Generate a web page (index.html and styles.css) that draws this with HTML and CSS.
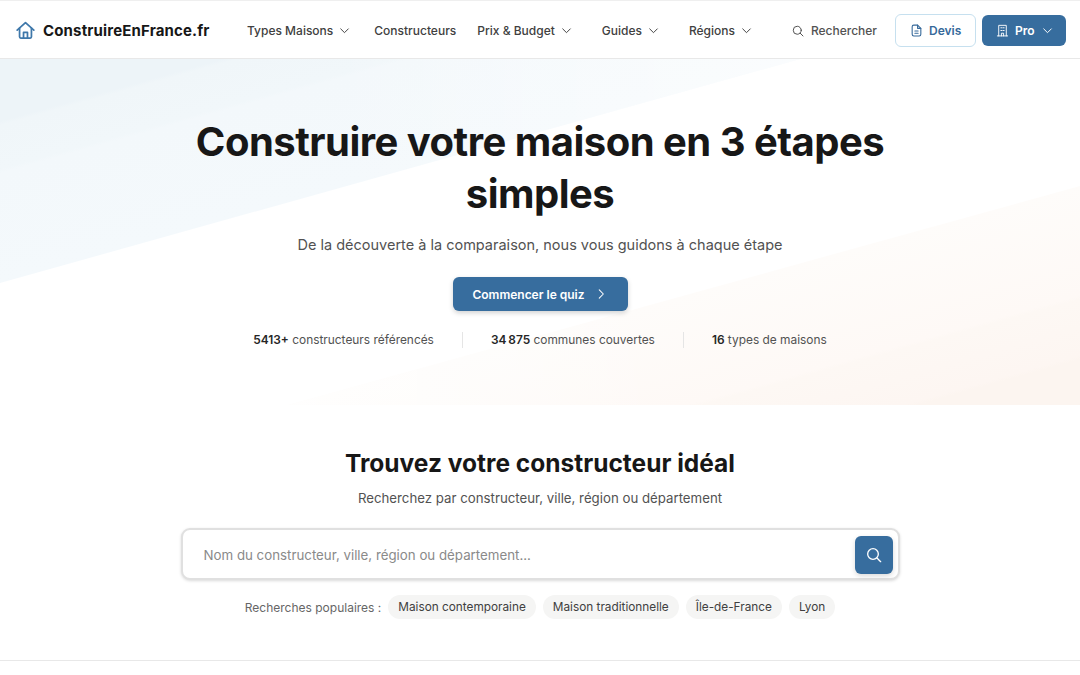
FILE: index.html
```html
<!DOCTYPE html>
<html lang="fr">
  <head>
    <meta charset="UTF-8" />
    <meta name="viewport" content="width=device-width" />
    <title>ConstruireEnFrance.fr</title>
    <link rel="stylesheet" href="styles.css">
  </head>
  <body>
    <header class="topbar">
      <a class="logo" href="#">
        <svg class="logo-icon" viewBox="0 0 24 24" fill="none" stroke="#3f78aa" stroke-width="2.200" stroke-linecap="round" stroke-linejoin="round">
          <path d="M1.500 11.500 12 2l10.500 9.500" />
          <path d="M4.500 9v11a1.500 1.500 0 0 0 1.500 1.500h12a1.500 1.500 0 0 0 1.500-1.500V9" />
          <path d="M9.500 21.500V14.500h5v7" />
        </svg>
        <span>ConstruireEnFrance.fr</span>
      </a>
      <nav class="nav">
        <a class="nav-link nav-types" href="#">Types Maisons
          <svg class="chev" viewBox="0 0 24 24"><path d="m5 9 7 7 7-7" /></svg>
        </a>
        <a class="nav-link nav-cons" href="#">Constructeurs</a>
        <a class="nav-link nav-prix" href="#">Prix &amp; Budget
          <svg class="chev" viewBox="0 0 24 24"><path d="m5 9 7 7 7-7" /></svg>
        </a>
        <a class="nav-link nav-guides" href="#">Guides
          <svg class="chev" viewBox="0 0 24 24"><path d="m5 9 7 7 7-7" /></svg>
        </a>
        <a class="nav-link" href="#">Régions
          <svg class="chev" viewBox="0 0 24 24"><path d="m5 9 7 7 7-7" /></svg>
        </a>
      </nav>
      <div class="actions">
        <a class="search-link" href="#">
          <svg class="search-icon" viewBox="0 0 24 24" fill="none" stroke="currentColor" stroke-width="2" stroke-linecap="round"><circle cx="10.500" cy="10.500" r="8" /><path d="m16.500 16.500 5.500 5.500" /></svg>
          Rechercher
        </a>
        <a class="btn-devis" href="#">
          <svg class="btn-icon" viewBox="0 0 24 24" fill="none" stroke="currentColor" stroke-width="2" stroke-linecap="round" stroke-linejoin="round"><path d="M14 2H7a3 3 0 0 0-3 3v14a3 3 0 0 0 3 3h10a3 3 0 0 0 3-3V8z" /><path d="M14 2v6h6M9 13h6M9 17h6" /></svg>
          Devis
        </a>
        <a class="btn-pro" href="#">
          <svg class="btn-icon" viewBox="0 0 24 24" fill="none" stroke="currentColor" stroke-width="1.700" stroke-linecap="round" stroke-linejoin="round"><path d="M5 22V2.500h14V22M2.500 22h19M10 22v-5h4v5M9 7h2M13 7h2M9 12h2M13 12h2" /></svg>
          Pro
          <svg class="chev chev-pro" viewBox="0 0 24 24"><path d="m5 9 7 7 7-7" /></svg>
        </a>
      </div>
    </header>

    <section class="hero">
      <h1>Construire votre maison en 3 étapes simples</h1>
      <p class="hero-sub">De la découverte à la comparaison, nous vous guidons à chaque étape</p>
      <a class="btn-quiz" href="#">Commencer le quiz
        <svg class="quiz-arrow" viewBox="0 0 24 24"><path d="m9 5 7 7-7 7" /></svg>
      </a>
      <div class="stats">
        <div class="stat"><b>5413+</b> constructeurs référencés</div>
        <div class="stat"><b>34&#8239;875</b> communes couvertes</div>
        <div class="stat"><b>16</b> types de maisons</div>
      </div>
    </section>

    <section class="finder">
      <h2>Trouvez votre constructeur idéal</h2>
      <p class="finder-sub">Recherchez par constructeur, ville, région ou département</p>
      <form class="search-box">
        <input type="text" placeholder="Nom du constructeur, ville, région ou département..." />
        <button type="button" class="search-btn" aria-label="Rechercher">
          <svg viewBox="0 0 24 24" fill="none" stroke="currentColor" stroke-width="2" stroke-linecap="round"><circle cx="10.500" cy="10.500" r="8" /><path d="m16.500 16.500 5.500 5.500" /></svg>
        </button>
      </form>
      <div class="popular">
        <span class="popular-label">Recherches populaires :</span>
        <a class="tag" href="#">Maison contemporaine</a>
        <a class="tag" href="#">Maison traditionnelle</a>
        <a class="tag" href="#">Île-de-France</a>
        <a class="tag" href="#">Lyon</a>
      </div>
    </section>
  </body>
</html>
```

FILE: styles.css
```css
* {
  box-sizing: border-box;
}

body {
  margin: 0;
  font-family: Inter, "Liberation Sans", sans-serif;
  background-color: white;
  color: #171717;
}

a {
  color: inherit;
  text-decoration: none;
}

svg {
  display: block;
  flex-shrink: 0;
}

.topbar {
  display: flex;
  align-items: center;
  height: 59px;
  padding: 2px 14px 0 16px;
  background-color: white;
  border-top: 1px solid #efefef;
  border-bottom: 1px solid #e8e8e8;
}

.logo {
  display: flex;
  align-items: center;
  gap: 8px;
  width: 231px;
  font-size: 15px;
  font-weight: 700;
  letter-spacing: 0.01em;
}

.logo-icon {
  width: 19px;
  height: 19px;
}

.nav {
  display: flex;
  align-items: center;
}

.nav-link {
  display: flex;
  align-items: center;
  gap: 5px;
  font-size: 12px;
  font-weight: 500;
  color: #404040;
}

.nav-types {
  margin-right: 23px;
}

.nav-cons {
  margin-right: 21px;
}

.nav-prix {
  margin-right: 29px;
}

.nav-guides {
  margin-right: 29px;
}

.chev {
  width: 13px;
  height: 13px;
  fill: none;
  stroke: currentColor;
  stroke-width: 1.800;
  stroke-linecap: round;
  stroke-linejoin: round;
}

.actions {
  display: flex;
  align-items: center;
  margin-left: auto;
}

.search-link {
  display: flex;
  align-items: center;
  gap: 7px;
  margin-right: 18px;
  font-size: 12px;
  font-weight: 500;
  color: #525252;
}

.search-icon {
  width: 12px;
  height: 12px;
}

.btn-devis,
.btn-pro {
  display: flex;
  align-items: center;
  font-size: 12px;
  font-weight: 600;
  border-radius: 6px;
}

.btn-devis {
  gap: 6px;
  height: 33px;
  width: 81px;
  margin-right: 6px;
  padding-left: 14px;
  color: #36699a;
  border: 1.500px solid #c6e0ef;
}

.btn-pro {
  gap: 6px;
  height: 31px;
  width: 84px;
  padding-left: 14px;
  color: white;
  background-color: #376d9e;
}

.btn-icon {
  width: 13px;
  height: 13px;
}

.chev-pro {
  width: 13px;
  height: 13px;
}

.hero {
  position: relative;
  display: flex;
  flex-direction: column;
  align-items: center;
  height: 346px;
  padding-top: 57px;
  overflow: hidden;
}

/* the two faded wedges behind the hero */
.hero::before,
.hero::after {
  content: "";
  position: absolute;
  inset: 0;
  z-index: -1;
}

.hero::before {
  background:
    linear-gradient(90deg, transparent 30%, rgba(255, 255, 255, 0.6) 74%),
    linear-gradient(164.4deg, #edf4f8 60px, #f0f6f9 64px, #f1f7fa 106px, #f3f8fb 110px, #f4f9fc 216px);
  clip-path: polygon(0 0, 800px 0, 0 224px);
}

.hero::after {
  background:
    linear-gradient(90deg, rgba(255, 255, 255, 0.75) 27%, transparent 62%),
    linear-gradient(164.4deg, #fefcfa 412px, #fef9f6 518px, #fdf8f4 522px, #fdf6f2 576px, #fcf5f0 580px);
  clip-path: polygon(1080px 127px, 1080px 346px, 288px 346px);
}

h1 {
  width: 720px;
  margin: 0;
  font-size: 40px;
  line-height: 52px;
  font-weight: 700;
  letter-spacing: -0.52px;
  text-align: center;
  color: #171717;
}

.hero-sub {
  margin: 13px 0 0;
  font-size: 14.500px;
  line-height: 24px;
  color: #525252;
}

.btn-quiz {
  display: flex;
  align-items: center;
  justify-content: center;
  gap: 9px;
  width: 175px;
  height: 34px;
  margin-top: 20px;
  font-size: 12px;
  font-weight: 600;
  color: white;
  background-color: #376d9e;
  border-radius: 6px;
  box-shadow: 0 2px 5px rgba(0, 0, 0, 0.18);
}

.quiz-arrow {
  width: 14px;
  height: 14px;
  fill: none;
  stroke: white;
  stroke-width: 1.800;
  stroke-linecap: round;
  stroke-linejoin: round;
}

.stats {
  display: flex;
  align-items: center;
  margin-top: 21px;
  font-size: 11.900px;
  color: #525252;
}

.stat {
  padding: 0 28px;
  line-height: 16px;
  border-left: 1px solid #e5e5e5;
}

.stat:first-child {
  border-left: none;
}

.stat b {
  font-weight: 600;
  color: #262626;
}

.finder {
  display: flex;
  flex-direction: column;
  align-items: center;
  height: 256px;
  padding-top: 42px;
  border-bottom: 1px solid #e8e8e8;
}

h2 {
  margin: 0;
  font-size: 24.500px;
  line-height: 32px;
  font-weight: 700;
  color: #171717;
}

.finder-sub {
  margin: 9px 0 0;
  font-size: 13.250px;
  line-height: 20px;
  color: #525252;
}

.search-box {
  display: flex;
  align-items: center;
  justify-content: space-between;
  width: 719px;
  height: 52px;
  margin-top: 20px;
  padding: 1px 5px 0 21px;
  background-color: white;
  border: 2px solid #e0e0e0;
  border-radius: 9px;
  box-shadow: 0 1px 3px rgba(0, 0, 0, 0.15);
}

.search-box input {
  flex: 1;
  border: none;
  outline: none;
  padding: 0;
  font-family: inherit;
  font-size: 13.300px;
  background: none;
}

.search-box input::placeholder {
  color: #8a8a8a;
}

.search-btn {
  display: flex;
  align-items: center;
  justify-content: center;
  width: 38px;
  height: 38px;
  padding: 0;
  border: none;
  border-radius: 6px;
  color: white;
  background-color: #376d9e;
  box-shadow: 0 2px 5px rgba(0, 0, 0, 0.15);
}

.search-btn svg {
  width: 16px;
  height: 16px;
}

.popular {
  display: flex;
  align-items: center;
  gap: 7px;
  margin-top: 15px;
  font-size: 11.800px;
}

.popular-label {
  font-size: 12px;
  color: #666;
}

.tag {
  padding: 0 10px;
  line-height: 24px;
  color: #404040;
  background-color: #f5f5f4;
  border-radius: 12px;
}
```
